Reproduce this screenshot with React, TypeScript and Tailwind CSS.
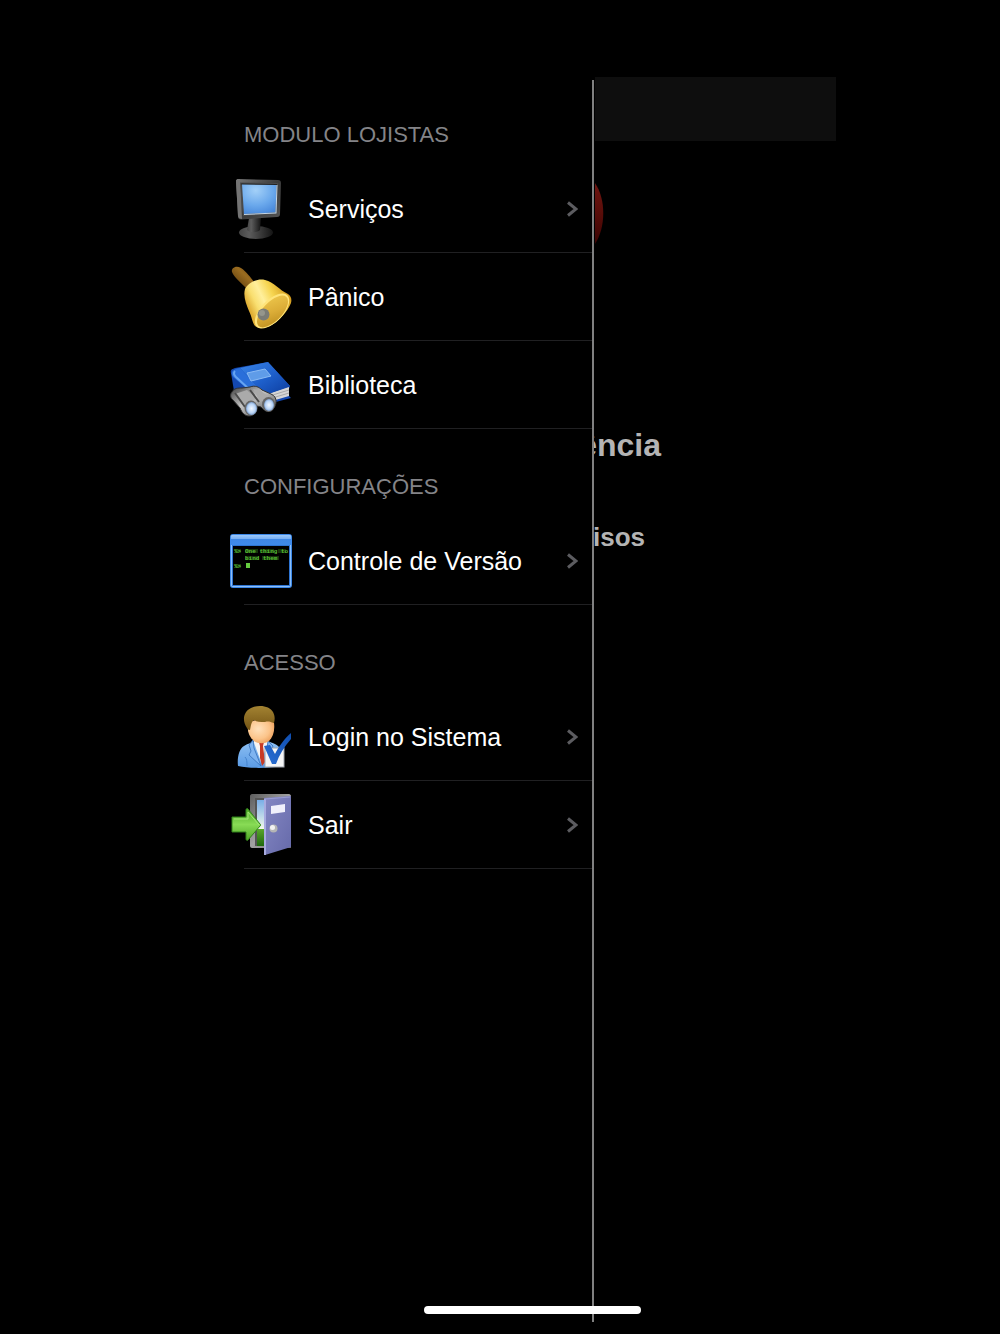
import React from 'react';

interface MenuItem {
  label: string;
  icon: React.FC;
  hasChevron: boolean;
}

interface MenuSection {
  title: string;
  items: MenuItem[];
}

const ServicesIcon: React.FC = () => (
  <svg viewBox="0 0 64 64" className="w-16 h-16" aria-hidden="true">
    <defs>
      <radialGradient id="screen" cx="0.4" cy="0.2" r="1">
        <stop offset="0" stopColor="#a3d0f8" />
        <stop offset="0.5" stopColor="#6ba9ec" />
        <stop offset="1" stopColor="#3a7bd4" />
      </radialGradient>
      <linearGradient id="bezel" x1="0" y1="0" x2="1" y2="1">
        <stop offset="0" stopColor="#777" />
        <stop offset="0.5" stopColor="#3a3a3a" />
        <stop offset="1" stopColor="#555" />
      </linearGradient>
      <linearGradient id="neck" x1="0" y1="0" x2="1" y2="0">
        <stop offset="0" stopColor="#444" />
        <stop offset="0.3" stopColor="#5c5c5c" />
        <stop offset="1" stopColor="#141414" />
      </linearGradient>
    </defs>
    <ellipse cx="28" cy="55.500" rx="17" ry="6.500" fill="url(#neck)" />
    <path d="M21 41h12l-1 12c-3 3-10 3-13 0z" fill="url(#neck)" />
    <path d="M10 2l40 1c2 0 3 1 3 3l-1 31c0 2-1 3-3 3l-36 2.500c-2 0-3-1-3-3L8 4c0-1 1-2 2-2z" fill="url(#bezel)" />
    <path d="M8 4c0-1 1-2 2-2h2l2 40c-2 0-4-1-4-3z" fill="#747474" />
    <path d="M12 5.500l38 .5-1 31-34 2z" fill="#4a4a4a" />
    <path d="M13 6.500l36 .5v1H14z" fill="#222" />
    <path d="M14 7.500l34.500.5L47.500 35.500 16 37z" fill="url(#screen)" />
    <path d="M48.500 8h1l-1 28.500L16 38v-1l31.500-1.500z" fill="#c2d3e3" />
  </svg>
);

const PanicIcon: React.FC = () => (
  <svg viewBox="0 0 64 64" className="w-16 h-16" aria-hidden="true">
    <defs>
      <linearGradient id="bell" x1="0.1" y1="0.6" x2="0.9" y2="0.2">
        <stop offset="0" stopColor="#e0ae35" />
        <stop offset="0.2" stopColor="#f9df70" />
        <stop offset="0.4" stopColor="#ffef9c" />
        <stop offset="0.65" stopColor="#f6d550" />
        <stop offset="1" stopColor="#d39a1c" />
      </linearGradient>
      <linearGradient id="bellInside" x1="0" y1="1" x2="1" y2="0">
        <stop offset="0" stopColor="#b98a1c" />
        <stop offset="0.5" stopColor="#dcae38" />
        <stop offset="1" stopColor="#efc94e" />
      </linearGradient>
      <linearGradient id="handle" x1="0" y1="1" x2="1" y2="0">
        <stop offset="0" stopColor="#52340a" />
        <stop offset="0.6" stopColor="#9a6c20" />
        <stop offset="1" stopColor="#6b450f" />
      </linearGradient>
    </defs>
    <path d="M4 7C3 3 8 0 13 3c5 3 10 10 13 14l-8 6C13 18 6 12 4 7z" fill="url(#handle)" />
    <path d="M17 24c3-6 12-11 20-9 9 2 14 10 23 14 3 2 4 5 3 9-3 8-12 18-21 23-5 2-12 3-15 0-3-4-3-9-6-15-3-7-6-15-4-22z" fill="url(#bell)" />
    <ellipse cx="44" cy="46" rx="22" ry="11" transform="rotate(-46 44 46)" fill="#ffe47a" />
    <ellipse cx="44.500" cy="46.500" rx="20" ry="9.500" transform="rotate(-46 44.500 46.500)" fill="url(#bellInside)" />
    <circle cx="35.500" cy="49.500" r="6" fill="#7b7c75" />
    <circle cx="34" cy="48" r="3" fill="#95968c" />
  </svg>
);

const LibraryIcon: React.FC = () => (
  <svg viewBox="0 0 64 64" className="w-16 h-16" aria-hidden="true">
    <defs>
      <linearGradient id="cover" x1="0" y1="0" x2="1" y2="1">
        <stop offset="0" stopColor="#3c87e8" />
        <stop offset="0.5" stopColor="#1e60cc" />
        <stop offset="1" stopColor="#0c3b9c" />
      </linearGradient>
      <linearGradient id="barrel" x1="0" y1="0" x2="1" y2="1">
        <stop offset="0" stopColor="#3a3a3a" />
        <stop offset="0.45" stopColor="#c4c4c4" />
        <stop offset="1" stopColor="#444" />
      </linearGradient>
      <radialGradient id="lens">
        <stop offset="0" stopColor="#f2f8ff" />
        <stop offset="0.7" stopColor="#b8d3f5" />
        <stop offset="1" stopColor="#7b9dcb" />
      </radialGradient>
    </defs>
    <g transform="translate(0 6)">
      <path d="M3 14c-1-3 1-4 4-5l33-6 22 24-1 3v7l2 2L44 44 33 46 6 32z" fill="#1448b0" />
      <path d="M37 36l24-8v9L44 42l-7-1z" fill="#d6d6d6" />
      <path d="M38 38l23-7M41 40l20-6" stroke="#a9a9a9" fill="none" />
      <path d="M12 9l28-6 22 24-25 9z" fill="url(#cover)" />
      <path d="M12 9l25 27-8 2L5 18c-3-4-1-8 7-9z" fill="#2a6fda" />
      <path d="M7 12c-2 2-1 4 1 6l14 13" stroke="#66a4f2" strokeWidth="2" fill="none" />
      <path d="M19 14l18-4 6 7-20 5z" fill="#5f9ce8" stroke="#8bbbf4" />
      <path d="M4 33c2-4 6-4 10-4l8-1c5-2 9 0 12 3l9 4c7 3 6 11 2 15-4 3-9 2-12-2l-4-1c0 6-3 10-8 10-4 0-7-3-9-8L5 41c-3-2-3-6-1-8z" fill="url(#barrel)" stroke="#333" />
      <path d="M7 35l12-4 9 9-11 6zM25 30l7 1 9 7-9 5z" fill="#aaa" />
      <path d="M7 34l10 14M22 31l9 12" stroke="#4a4a4a" strokeWidth="2" fill="none" />
      <ellipse cx="23" cy="49" rx="6.500" ry="7.500" fill="#666" />
      <ellipse cx="23.500" cy="49.500" rx="5.500" ry="6.500" fill="url(#lens)" />
      <ellipse cx="40.500" cy="45.500" rx="6.500" ry="7.500" fill="#666" />
      <ellipse cx="41" cy="46" rx="5" ry="6" fill="url(#lens)" />
    </g>
  </svg>
);

const VersionIcon: React.FC = () => (
  <svg viewBox="0 0 64 64" className="w-16 h-16" aria-hidden="true">
    <defs>
      <linearGradient id="titleBar" x1="0" y1="0" x2="0" y2="1">
        <stop offset="0" stopColor="#9cc8fa" />
        <stop offset="0.35" stopColor="#7cb2f4" />
        <stop offset="0.45" stopColor="#3f88e6" />
        <stop offset="1" stopColor="#3e8bea" />
      </linearGradient>
    </defs>
    <rect x="2" y="5" width="62" height="54" rx="3" fill="#3c88e8" />
    <rect x="3" y="6" width="60" height="52" rx="2" fill="#8dbff7" />
    <rect x="4" y="7" width="58" height="50" fill="#2e74d2" />
    <path d="M3 7c0-1 1-1 2-1h56c1 0 2 0 2 1v9H3z" fill="url(#titleBar)" />
    <rect x="5" y="17" width="56" height="39" fill="#000" />
    <g stroke="#37841f" strokeWidth="4" opacity="0.400">
      <path d="M7 22h6M17 22h13M33 22h13M50 22h8M17 29h14M34 29h17M7 37h6" />
    </g>
    <g className="font-['Liberation_Mono',monospace] font-bold" fontSize="6" fill="#58bd36">
      <text x="6" y="24">%&gt;</text>
      <text x="17" y="24">One thing to</text>
      <text x="17" y="31">bind them</text>
      <text x="6" y="39">%&gt;</text>
    </g>
    <rect x="18" y="34" width="4" height="5" fill="#65cc3f" />
  </svg>
);

const LoginIcon: React.FC = () => (
  <svg viewBox="0 0 64 64" className="w-16 h-16" aria-hidden="true">
    <defs>
      <radialGradient id="face" cx="0.4" cy="0.4" r="0.7">
        <stop offset="0" stopColor="#ffe2bd" />
        <stop offset="0.6" stopColor="#fbc48a" />
        <stop offset="1" stopColor="#e99a55" />
      </radialGradient>
      <linearGradient id="suit" x1="0" y1="0" x2="0" y2="1">
        <stop offset="0" stopColor="#8ec0f3" />
        <stop offset="1" stopColor="#5a9be5" />
      </linearGradient>
      <linearGradient id="hair" x1="0" y1="0" x2="0" y2="1">
        <stop offset="0" stopColor="#a38332" />
        <stop offset="1" stopColor="#745414" />
      </linearGradient>
      <linearGradient id="check" x1="1" y1="0" x2="0" y2="1">
        <stop offset="0" stopColor="#0f4eb0" />
        <stop offset="1" stopColor="#2c70d4" />
      </linearGradient>
    </defs>
    <path d="M10 61c-1-8 1-17 6-20 4-3 8-3 12-5h12c4 2 9 3 12 7 4 5 4 12 4 18-13 2-33 3-46 0z" fill="url(#suit)" />
    <path d="M25 35l8 22 7-20z" fill="#f4f4f4" />
    <path d="M31 37h5l-1 4 2 16-3 4-2-8 0-12z" fill="#c73a24" />
    <path d="M25 35l-4 5 2 6-2 4 12 11-7-18z" fill="#7fb4f0" stroke="#346fb9" strokeWidth="0.800" />
    <path d="M40 36l5 5-2 5-5 8z" fill="#7fb4f0" stroke="#346fb9" strokeWidth="0.800" />
    <path d="M17 52c2 2 2 5 2 9" stroke="#4684ce" fill="none" />
    <path d="M20 19c2-5 22-7 26-1 1 8-1 14-5 18-4 3-11 3-15 0-5-4-7-10-6-17z" fill="url(#face)" />
    <path d="M19 23C14 16 15 7 23 3c8-4 19-2 22 4 2 4 2 7 1 11-4-1-5-2-9-1-5 0-8 0-11-2-3 2-3 6-4 10-2 0-2-1-3-2z" fill="url(#hair)" />
    <rect x="37" y="43" width="19" height="19" fill="#f5f5f5" stroke="#9fa5ad" />
    <path d="M36 41l6-1 5 9C51 41 57 33 63 28v6c-7 8-12 16-15 25h-4z" fill="url(#check)" />
  </svg>
);

const ExitIcon: React.FC = () => (
  <svg viewBox="0 0 64 64" className="w-16 h-16" aria-hidden="true">
    <defs>
      <linearGradient id="frame" x1="0" y1="0" x2="1" y2="1">
        <stop offset="0" stopColor="#5e5e5e" />
        <stop offset="0.5" stopColor="#a2a2a2" />
        <stop offset="1" stopColor="#666" />
      </linearGradient>
      <linearGradient id="sky" x1="0" y1="0" x2="0" y2="1">
        <stop offset="0" stopColor="#79aee8" />
        <stop offset="0.62" stopColor="#f1f7e9" />
        <stop offset="0.63" stopColor="#5aa52c" />
        <stop offset="1" stopColor="#1f680d" />
      </linearGradient>
      <linearGradient id="door" x1="0" y1="0" x2="1" y2="1">
        <stop offset="0" stopColor="#8588c4" />
        <stop offset="1" stopColor="#666aaa" />
      </linearGradient>
      <linearGradient id="arrow" x1="0" y1="0" x2="0" y2="1">
        <stop offset="0" stopColor="#4ea927" />
        <stop offset="0.5" stopColor="#88db55" />
        <stop offset="1" stopColor="#4fa626" />
      </linearGradient>
    </defs>
    <path d="M24 1h37c1 0 2 1 2 2v52H24c-1 0-2-1-2-2V3c0-1 1-2 2-2z" fill="url(#frame)" />
    <path d="M27 5h31v48H27z" fill="#555" />
    <path d="M29 7h18v46H29z" fill="url(#sky)" />
    <path d="M36 5l27-2v51l-26 8c-1 0-1 0-1-1z" fill="url(#door)" />
    <path d="M37 6v56" stroke="#a8abe0" strokeWidth="2" />
    <path d="M37 6l25-2" stroke="#9b9ed5" />
    <path d="M43 13l14-2v8l-14 2z" fill="#f0f0fb" />
    <circle cx="45.500" cy="35.500" r="4" fill="#b5b5b5" />
    <circle cx="44.500" cy="34.500" r="2.500" fill="#f2f2f2" />
    <path d="M4 24h14v-7c0-1 1-2 2-1l12 15c1 1 1 1 0 2L20 47c-1 1-2 0-2-1v-7H4z" fill="url(#arrow)" stroke="#31821a" />
    <path d="M6 26h14v-7l11 13" fill="none" stroke="#a2e477" strokeWidth="1" />
  </svg>
);

const Chevron: React.FC = () => (
  <svg viewBox="0 0 12 16" className="w-3 h-4 shrink-0" fill="none" stroke="#5c5c60" strokeWidth="3" aria-hidden="true">
    <path d="M2 1.500L10 8l-8 6.500" />
  </svg>
);

const sections: MenuSection[] = [
  {
    title: 'MODULO LOJISTAS',
    items: [
      { label: 'Serviços', icon: ServicesIcon, hasChevron: true },
      { label: 'Pânico', icon: PanicIcon, hasChevron: false },
      { label: 'Biblioteca', icon: LibraryIcon, hasChevron: false },
    ],
  },
  {
    title: 'CONFIGURAÇÕES',
    items: [{ label: 'Controle de Versão', icon: VersionIcon, hasChevron: true }],
  },
  {
    title: 'ACESSO',
    items: [
      { label: 'Login no Sistema', icon: LoginIcon, hasChevron: true },
      { label: 'Sair', icon: ExitIcon, hasChevron: true },
    ],
  },
];

const MenuRow: React.FC<{ item: MenuItem }> = ({ item }) => {
  const Icon = item.icon;
  return (
    <li>
      <button type="button" className="w-full h-[87px] flex items-center gap-4 pr-3.5 text-left text-[25px] leading-8 text-white">
        <Icon />
        <span className="flex-1 pt-px">{item.label}</span>
        {item.hasChevron && <Chevron />}
      </button>
      <hr className="ml-4 border-t border-[#202022]" />
    </li>
  );
};

const App: React.FC = () => {
  return (
    <div className="min-h-screen bg-black overflow-hidden font-['Liberation_Sans',Arial,sans-serif] flex">
      <div className="relative w-full max-w-[672px] mx-auto pt-[77px] pb-3 flex">
        {/* Side menu */}
        <nav className="w-[428px] shrink-0 pl-16">
          {sections.map((section) => (
            <section key={section.title}>
              <h2 className="h-[88px] pl-4 pt-11 text-[22px] leading-7 text-[#848488]">{section.title}</h2>
              <ul>
                {section.items.map((item) => (
                  <MenuRow key={item.label} item={item} />
                ))}
              </ul>
            </section>
          ))}
        </nav>
        <div className="w-0.5 shrink-0 mt-[3px] bg-[#808080]"></div>

        {/* Dimmed page behind the menu */}
        <main className="flex-1 min-w-0 overflow-hidden">
          <header className="h-16 ml-px bg-[#0e0e0e]"></header>
          <svg viewBox="0 0 9 64" className="w-[9px] h-16 ml-px mt-10" aria-hidden="true">
            <defs>
              <linearGradient id="badge" x1="0" y1="0" x2="0" y2="1">
                <stop offset="0" stopColor="#701611" />
                <stop offset="0.5" stopColor="#590d09" />
                <stop offset="1" stopColor="#3c0403" />
              </linearGradient>
            </defs>
            <path d="M0 2C11 18 11 46 0 63z" fill="url(#badge)" />
          </svg>
          <h1 className="mt-[180px] pr-[175px] flex justify-end text-[32px] leading-10 font-bold text-[#b4b4b4]">ência</h1>
          <h2 className="mt-14 pr-[191px] flex justify-end text-[26px] leading-8 font-bold text-[#b4b4b4]">isos</h2>
        </main>

        {/* Home indicator */}
        <div className="absolute bottom-5 left-[260px] w-[217px] h-2 rounded-full bg-white"></div>
      </div>
    </div>
  );
};

export default App;
